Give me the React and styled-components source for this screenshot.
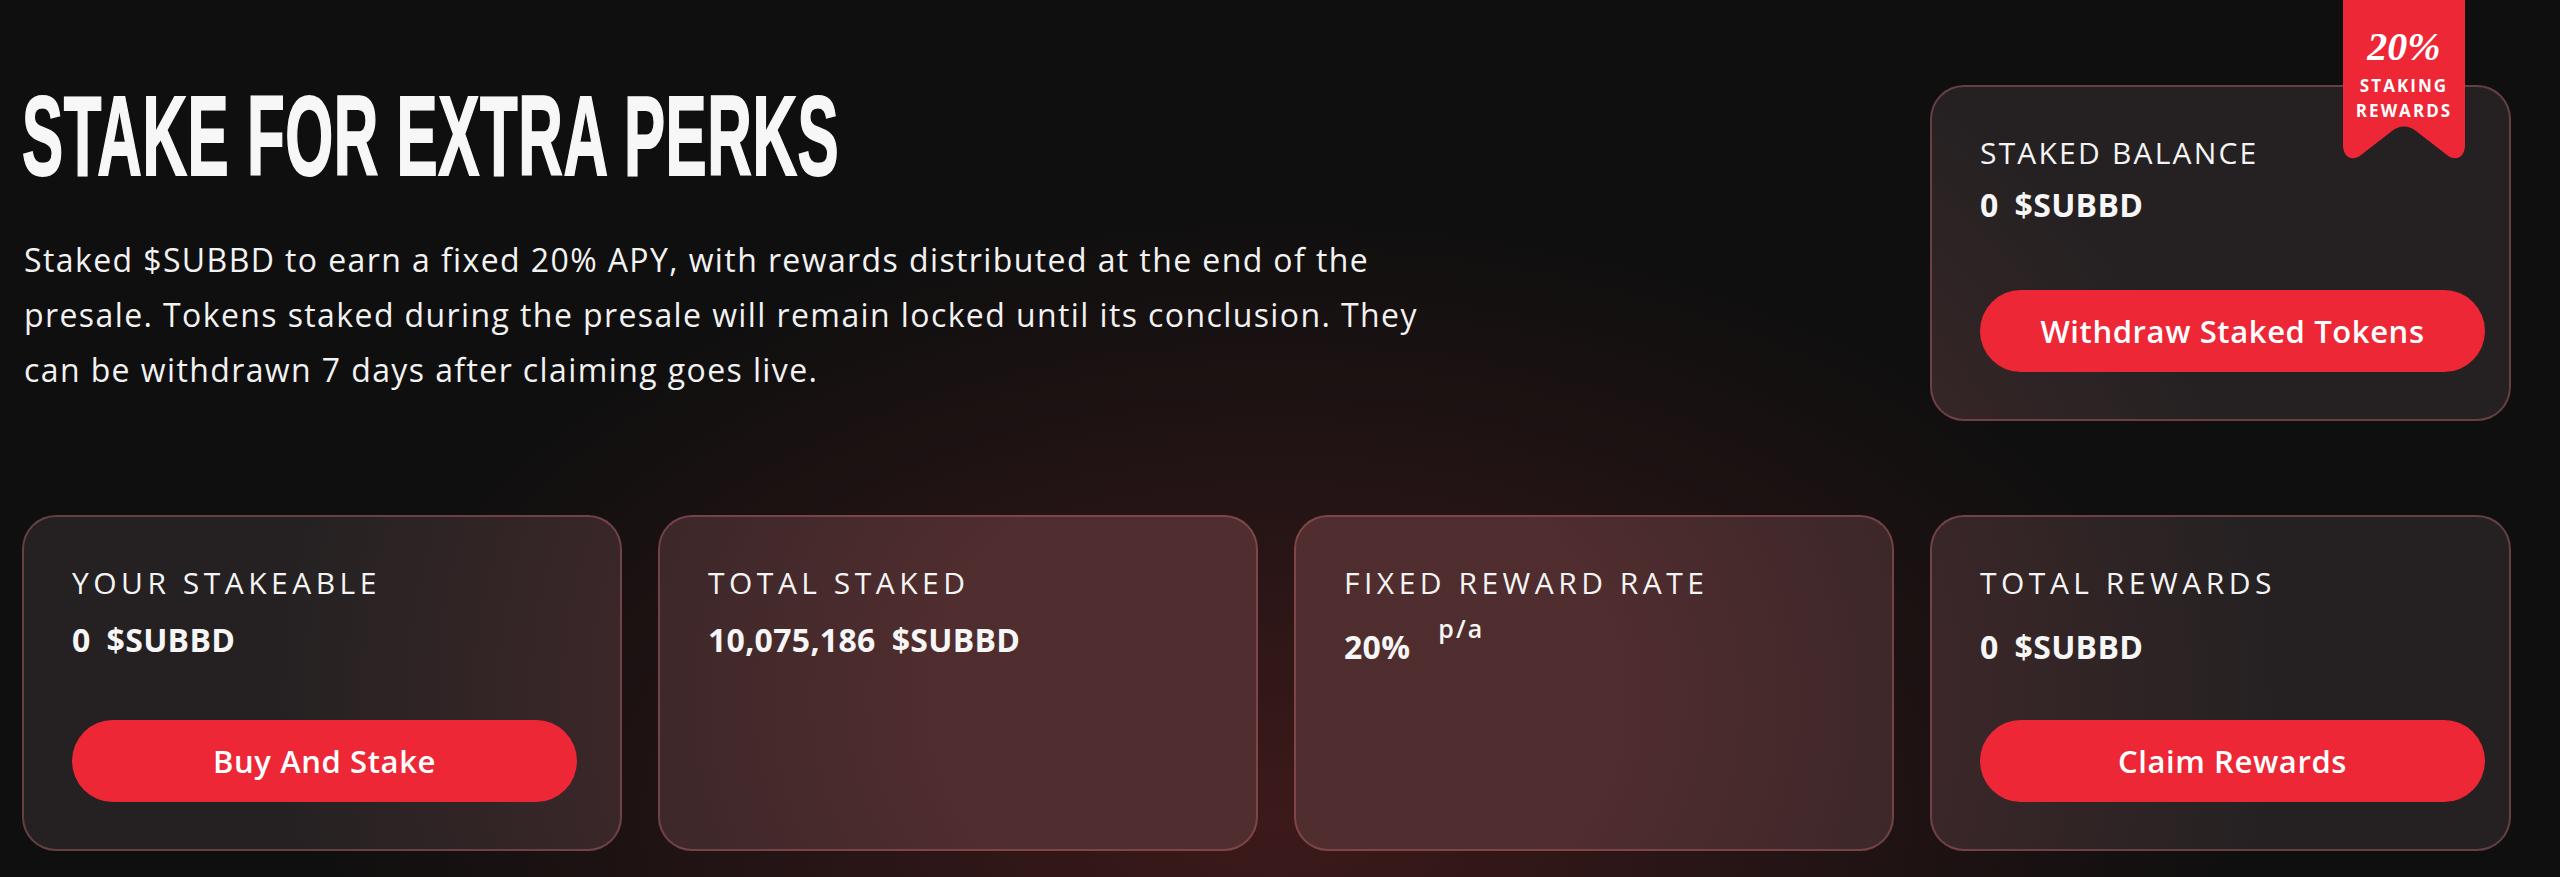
import React, { useLayoutEffect, useRef, useState } from "react";
import styled, { createGlobalStyle } from "styled-components";

const Global = createGlobalStyle`
  html, body { margin: 0; padding: 0; }
  body {
    width: 2560px;
    height: 877px;
    overflow: hidden;
    background:
      radial-gradient(ellipse 950px 600px at 1276px 820px, rgba(105, 36, 39, 0.5), rgba(105, 36, 39, 0) 100%),
      #100f0f;
    font-family: "Open Sans", "Liberation Sans", sans-serif;
    color: #f4f4f4;
  }
`;

const Page = styled.main`
  box-sizing: border-box;
  width: 2560px;
  height: 877px;
  padding: 80px 49px 0 22px;
  display: flex;
  flex-direction: column;
`;

const TopRow = styled.section`
  display: flex;
  justify-content: space-between;
  align-items: flex-start;
`;

const Intro = styled.div`
  display: flex;
  flex-direction: column;
`;

const TitleBox = styled.h1`
  margin: 0;
  height: 112px;
  line-height: 1;
`;

const TitleText = styled.span`
  display: inline-block;
  white-space: nowrap;
  transform-origin: left center;
  font-family: "Liberation Sans Narrow", "Liberation Sans", sans-serif;
  font-weight: 700;
  font-size: 114px;
  line-height: 112px;
  color: #f7f7f7;
  letter-spacing: 1px;
  -webkit-text-stroke: 2px #f7f7f7;
`;

const Lead = styled.p`
  margin: 40px 0 0 2px;
  font-size: 32px;
  line-height: 55px;
  letter-spacing: 1.4px;
  color: #f2f2f2;
  white-space: nowrap;
`;

const Grid = styled.section`
  margin-top: 94px;
  display: grid;
  grid-template-columns: 600px 600px 600px 581px;
  column-gap: 36px;
`;

const Card = styled.div`
  position: relative;
  box-sizing: border-box;
  width: ${(p) => (p.$width ? p.$width + "px" : "auto")};
  height: 336px;
  margin-top: ${(p) => p.$offset || 0}px;
  padding: 46px 36px 47px 48px;
  border-radius: 34px;
  border: 2px solid rgba(192, 106, 112, 0.42);
  background:
    radial-gradient(
        ellipse 1000px 800px at 1276px 700px,
        rgba(122, 56, 59, 0.5) 0%,
        rgba(122, 56, 59, 0.5) 35%,
        rgba(122, 56, 59, 0) 100%
      )
      fixed,
    #252122;
  display: flex;
  flex-direction: column;
`;

const Label = styled.div`
  font-size: 30px;
  line-height: 40px;
  letter-spacing: ${(p) => p.$tracking || 4.5}px;
  font-weight: 400;
  text-transform: uppercase;
  color: #f4f4f4;
`;

const Value = styled.div`
  margin-top: ${(p) => p.$gap || 17}px;
  display: flex;
  align-items: flex-start;
  gap: 16px;
  font-size: 32px;
  line-height: 40px;
  letter-spacing: 0.3px;
  font-weight: 700;
  color: #f6f6f6;
`;

const Per = styled.span`
  margin-left: 12px;
  margin-top: -14px;
  font-size: 25px;
  font-weight: 600;
  letter-spacing: 2px;
  line-height: 30px;
`;

const Button = styled.button`
  margin-top: auto;
  width: 505px;
  height: 82px;
  border: none;
  border-radius: 41px;
  background: #ee2737;
  color: #ffffff;
  font-family: "Open Sans", "Liberation Sans", sans-serif;
  font-size: 31px;
  letter-spacing: 0.6px;
  font-weight: 600;
  cursor: pointer;
`;

const Ribbon = styled.div`
  position: absolute;
  top: -87px;
  right: 44px;
  width: 122px;
  height: 160px;
  display: flex;
  flex-direction: column;
  align-items: center;
  padding-top: 27px;
  box-sizing: border-box;
`;

const RibbonShape = styled.svg`
  position: absolute;
  inset: 0;
  z-index: 0;
`;

const RibbonBig = styled.span`
  position: relative;
  font-family: "Liberation Serif", "DejaVu Serif", serif;
  font-style: italic;
  font-weight: 700;
  font-size: 40px;
  line-height: 40px;
  color: #ffffff;
`;

const RibbonSmall = styled.span`
  position: relative;
  margin-top: ${(p) => p.$mt || 0}px;
  font-size: 17px;
  line-height: 25px;
  font-weight: 700;
  letter-spacing: 0.12em;
  color: #ffffff;
`;

function Title({ children, target }) {
  const ref = useRef(null);
  const [scale, setScale] = useState(1);
  useLayoutEffect(() => {
    if (ref.current) setScale(target / ref.current.offsetWidth);
  }, [target]);
  return (
    <TitleBox>
      <TitleText ref={ref} style={{ transform: `scaleX(${scale})` }}>
        {children}
      </TitleText>
    </TitleBox>
  );
}

export default function App() {
  return (
    <>
      <Global />
      <Page>
        <TopRow>
          <Intro>
            <Title target={817}>STAKE FOR EXTRA PERKS</Title>
            <Lead>
              Staked $SUBBD to earn a fixed 20% APY, with rewards distributed at the end of the
              <br />
              presale. Tokens staked during the presale will remain locked until its conclusion. They
              <br />
              can be withdrawn 7 days after claiming goes live.
            </Lead>
          </Intro>
          <Card $width={581} $offset={5}>
            <Ribbon>
              <RibbonShape viewBox="0 0 122 160" width="122" height="160" aria-hidden="true">
                <path
                  d="M0 0 H122 V145 C122 157 113 162 104 155 L73 131 C66 125 56 125 49 131 L18 155 C9 162 0 157 0 145 Z"
                  fill="#ee2737"
                />
              </RibbonShape>
              <RibbonBig>20%</RibbonBig>
              <RibbonSmall $mt={6}>STAKING</RibbonSmall>
              <RibbonSmall>REWARDS</RibbonSmall>
            </Ribbon>
            <Label $tracking={2.2}>Staked Balance</Label>
            <Value $gap={12}>
              <span>0</span>
              <span>$SUBBD</span>
            </Value>
            <Button>Withdraw Staked Tokens</Button>
          </Card>
        </TopRow>
        <Grid>
          <Card>
            <Label>Your Stakeable</Label>
            <Value $gap={17}>
              <span>0</span>
              <span>$SUBBD</span>
            </Value>
            <Button>Buy And Stake</Button>
          </Card>
          <Card>
            <Label>Total Staked</Label>
            <Value $gap={17}>
              <span>10,075,186</span>
              <span>$SUBBD</span>
            </Value>
          </Card>
          <Card>
            <Label>Fixed Reward Rate</Label>
            <Value $gap={24}>
              <span>20%</span>
              <Per>p/a</Per>
            </Value>
          </Card>
          <Card>
            <Label>Total Rewards</Label>
            <Value $gap={24}>
              <span>0</span>
              <span>$SUBBD</span>
            </Value>
            <Button>Claim Rewards</Button>
          </Card>
        </Grid>
      </Page>
    </>
  );
}
